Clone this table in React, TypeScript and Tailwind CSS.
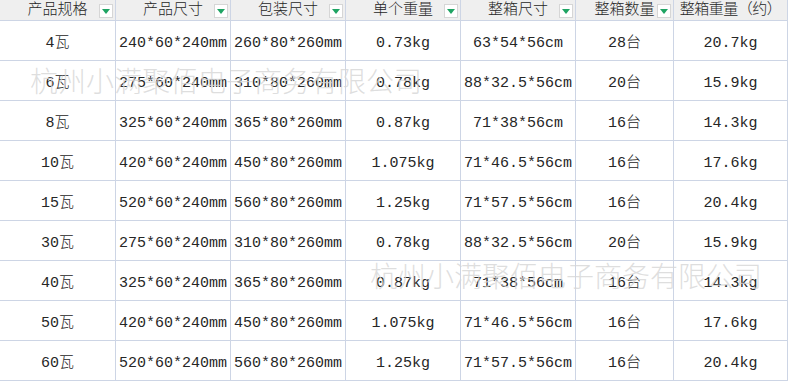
const HEADERS = ["产品规格", "产品尺寸", "包装尺寸", "单个重量", "整箱尺寸", "整箱数量", "整箱重量（约）"];

const ROWS: string[][] = [
  ["4瓦", "240*60*240mm", "260*80*260mm", "0.73kg", "63*54*56cm", "28台", "20.7kg"],
  ["6瓦", "275*60*240mm", "310*80*260mm", "0.78kg", "88*32.5*56cm", "20台", "15.9kg"],
  ["8瓦", "325*60*240mm", "365*80*260mm", "0.87kg", "71*38*56cm", "16台", "14.3kg"],
  ["10瓦", "420*60*240mm", "450*80*260mm", "1.075kg", "71*46.5*56cm", "16台", "17.6kg"],
  ["15瓦", "520*60*240mm", "560*80*260mm", "1.25kg", "71*57.5*56cm", "16台", "20.4kg"],
  ["30瓦", "275*60*240mm", "310*80*260mm", "0.78kg", "88*32.5*56cm", "20台", "15.9kg"],
  ["40瓦", "325*60*240mm", "365*80*260mm", "0.87kg", "71*38*56cm", "16台", "14.3kg"],
  ["50瓦", "420*60*240mm", "450*80*260mm", "1.075kg", "71*46.5*56cm", "16台", "17.6kg"],
  ["60瓦", "520*60*240mm", "560*80*260mm", "1.25kg", "71*57.5*56cm", "16台", "20.4kg"],
];

function FilterButton() {
  return (
    <span className="absolute right-[2px] top-[4px] flex h-[14px] w-[14px] items-center justify-center border border-[#d6d6d6] bg-white">
      <svg width="8" height="5" viewBox="0 0 8 5">
        <path d="M0 0h8L4 5z" fill="#1fa463" />
      </svg>
    </span>
  );
}

export default function App() {
  return (
    <div
      className="relative h-[381px] w-[790px] overflow-hidden bg-white text-[15px] font-light text-[#262626]"
      style={{ fontFamily: '"Liberation Mono", "Noto Sans CJK SC", monospace' }}
    >
      <div className="grid grid-cols-[116px_115px_115px_115px_115px_98px_114px]">
        {HEADERS.map((h, i) => (
          <div
            key={h}
            className="relative flex h-[21px] items-center justify-center border-r border-b border-[#cdd5e5] bg-[#efefef] leading-none"
          >
            <span className={i === 6 ? "tracking-[-0.5px]" : ""}>{h}</span>
            {i < 6 && <FilterButton />}
          </div>
        ))}
        {ROWS.map((row, r) =>
          row.map((cell, c) => (
            <div
              key={`${r}-${c}`}
              className="flex h-[40px] items-center justify-center border-r border-b border-[#cdd5e5] pt-[5px] leading-none"
            >
              {cell}
            </div>
          ))
        )}
      </div>

      <div
        className="pointer-events-none absolute left-[30px] top-[66px] whitespace-nowrap text-[28px] font-light leading-none text-[#d6d6d6]/80"
        style={{ fontFamily: '"Noto Sans CJK SC", sans-serif' }}
      >
        杭州小满聚佰电子商务有限公司
      </div>
      <div
        className="pointer-events-none absolute left-[370px] top-[261px] whitespace-nowrap text-[28px] font-light leading-none text-[#d6d6d6]/80"
        style={{ fontFamily: '"Noto Sans CJK SC", sans-serif' }}
      >
        杭州小满聚佰电子商务有限公司
      </div>
    </div>
  );
}
